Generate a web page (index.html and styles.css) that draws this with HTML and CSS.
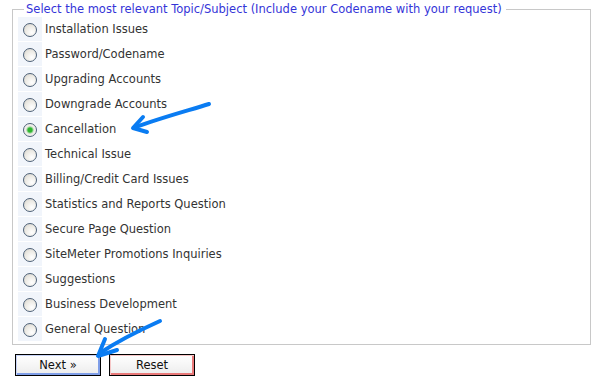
FILE: index.html
```html
<!DOCTYPE html>
<html lang="en">
<head>
    <meta charset="UTF-8">
    <title>Contact Support</title>
    <link rel="stylesheet" href="styles.css">
</head>
<body>

    <form class="support-form">
        <fieldset class="topics">
            <legend>Select the most relevant Topic/Subject (Include your Codename with your request)</legend>
            <table class="topic-list">
                <tr><td class="pick"><input type="radio" name="topic" id="t1"></td><td><label for="t1">Installation Issues</label></td></tr>
                <tr><td class="pick"><input type="radio" name="topic" id="t2"></td><td><label for="t2">Password/Codename</label></td></tr>
                <tr><td class="pick"><input type="radio" name="topic" id="t3"></td><td><label for="t3">Upgrading Accounts</label></td></tr>
                <tr><td class="pick"><input type="radio" name="topic" id="t4"></td><td><label for="t4">Downgrade Accounts</label></td></tr>
                <tr><td class="pick"><input type="radio" name="topic" id="t5" checked></td><td><label for="t5">Cancellation</label></td></tr>
                <tr><td class="pick"><input type="radio" name="topic" id="t6"></td><td><label for="t6">Technical Issue</label></td></tr>
                <tr><td class="pick"><input type="radio" name="topic" id="t7"></td><td><label for="t7">Billing/Credit Card Issues</label></td></tr>
                <tr><td class="pick"><input type="radio" name="topic" id="t8"></td><td><label for="t8">Statistics and Reports Question</label></td></tr>
                <tr><td class="pick"><input type="radio" name="topic" id="t9"></td><td><label for="t9">Secure Page Question</label></td></tr>
                <tr><td class="pick"><input type="radio" name="topic" id="t10"></td><td><label for="t10">SiteMeter Promotions Inquiries</label></td></tr>
                <tr><td class="pick"><input type="radio" name="topic" id="t11"></td><td><label for="t11">Suggestions</label></td></tr>
                <tr><td class="pick"><input type="radio" name="topic" id="t12"></td><td><label for="t12">Business Development</label></td></tr>
                <tr><td class="pick"><input type="radio" name="topic" id="t13"></td><td><label for="t13">General Question</label></td></tr>
            </table>
        </fieldset>

        <div class="actions">
            <button type="button" class="btn btn-next">Next &raquo;</button>
            <button type="reset" class="btn btn-reset">Reset</button>
        </div>
    </form>

    <!-- hand drawn arrows on top of the form -->
    <svg class="marks" width="600" height="384" viewBox="0 0 600 384">
        <g fill="none" stroke="#0a7cf2" stroke-width="4" stroke-linecap="round" stroke-linejoin="round">
            <path d="M209 104 C190 110 160 118 136 127"/>
            <path d="M143 117 L133 128 L147 132"/>
            <path d="M160 321 C140 330 118 341 100 353"/>
            <path d="M105 339 L98 356 L117 350"/>
        </g>
    </svg>

</body>
</html>
```

FILE: styles.css
```css
body {
    font-family: "DejaVu Sans", Verdana, sans-serif;
    font-size: 11.5px;
    color: #333;
    background: #fff;
    margin: 0;
    padding: 0;
}
.support-form {
    padding: 2px 10px 0 12px;
}
.topics {
    width: 579px;
    margin: 0;
    padding: 0 0 4px 5px;
    border: 1px solid #c8c8c8;
    box-sizing: border-box;
    height: 343px;
}
.topics legend {
    color: #3434d8;
    font-size: 11.5px;
    padding: 0 4px 0 2px;
    margin-left: 6px;
}
.topic-list {
    border-collapse: separate;
    border-spacing: 0 1px;
    margin-top: 0;
}
.topic-list td {
    height: 24px;
    padding: 0;
}
.topic-list td.pick {
    width: 24px;
    background: #f1f5fb;
    text-align: center;
}
.topic-list label {
    padding-left: 3px;
}
.topic-list input {
    -webkit-appearance: none;
    appearance: none;
    width: 14px;
    height: 14px;
    margin: 0;
    border: 1px solid #4d6178;
    border-radius: 50%;
    background: radial-gradient(circle at 65% 70%, #ffffff 0%, #eceae4 55%, #d2cfc8 100%);
    vertical-align: middle;
    position: relative;
    top: 1px;
}
.topic-list input:checked {
    background: radial-gradient(circle, #2fb52f 0, #2fb52f 2px, #8fd48f 3px, #eceae4 4px, #ffffff 100%);
}
.actions {
    display: flex;
    gap: 8px;
    padding: 9px 0 0 3px;
}
.btn {
    width: 86px;
    height: 22px;
    font-family: "DejaVu Sans", Verdana, sans-serif;
    font-size: 11.5px;
    color: #111;
    border: 1px solid #000;
    background: linear-gradient(to bottom, #ffffff, #ececec);
    cursor: pointer;
    padding: 0;
}
.btn-next {
    box-shadow: inset 1px 1px 0 #c7d3f7, inset -2px -2px 0 #7f9ee8;
}
.btn-reset {
    box-shadow: inset 1px 1px 0 #f6c6c6, inset -2px -2px 0 #e97979;
}
.marks {
    position: absolute;
    left: 0;
    top: 0;
    pointer-events: none;
}
```
